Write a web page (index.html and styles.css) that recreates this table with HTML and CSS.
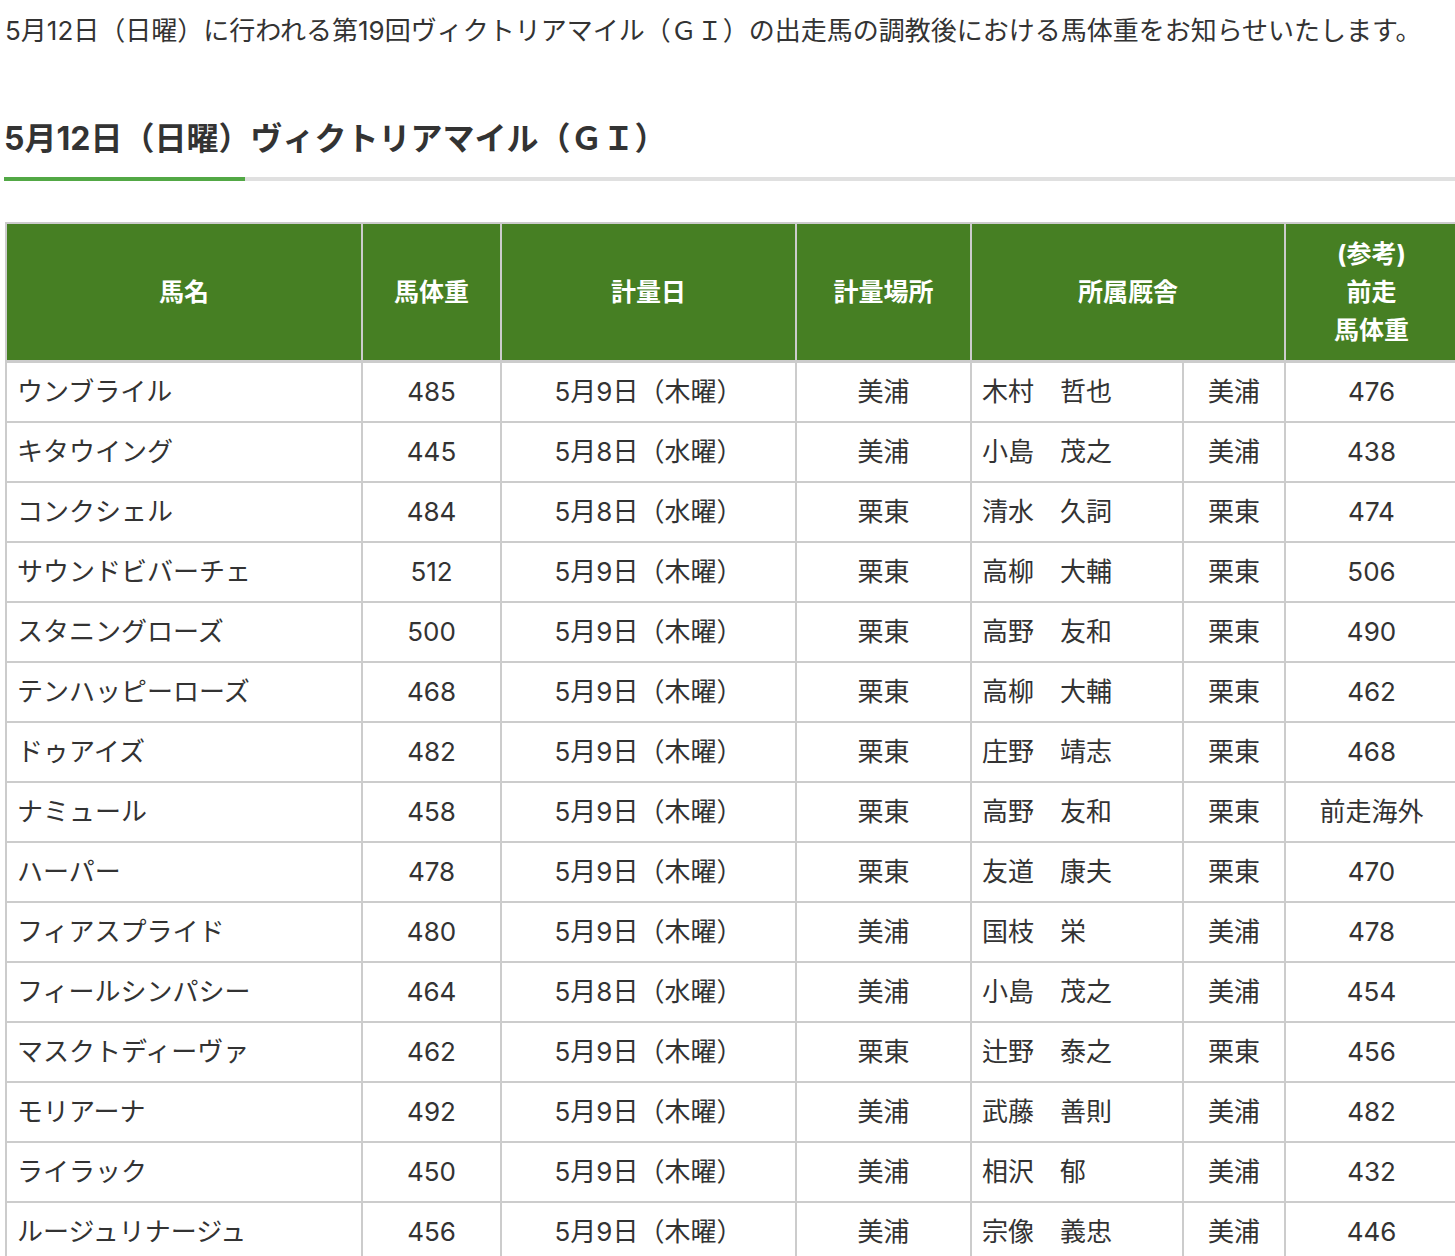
FILE: index.html
```html
<!DOCTYPE html>
<html lang="ja">
<head>
<meta charset="utf-8">
<title>馬体重</title>
<link rel="stylesheet" href="styles.css">
</head>
<body>
<main class="page">
  <p class="intro">5月12日（日曜）に行われる第19回ヴィクトリアマイル（ＧＩ）の出走馬の調教後における馬体重をお知らせいたします。</p>
  <h2 class="heading">5月12日（日曜）ヴィクトリアマイル（ＧＩ）</h2>
  <table class="weights">
    <colgroup>
      <col class="c-name"><col class="c-weight"><col class="c-date"><col class="c-place"><col class="c-trainer"><col class="c-stable"><col class="c-prev">
    </colgroup>
    <thead>
      <tr>
        <th>馬名</th>
        <th>馬体重</th>
        <th>計量日</th>
        <th>計量場所</th>
        <th colspan="2">所属厩舎</th>
        <th>(参考)<br>前走<br>馬体重</th>
      </tr>
    </thead>
    <tbody>
      <tr><td class="left">ウンブライル</td><td>485</td><td>5月9日（木曜）</td><td>美浦</td><td class="left">木村　哲也</td><td>美浦</td><td>476</td></tr>
      <tr><td class="left">キタウイング</td><td>445</td><td>5月8日（水曜）</td><td>美浦</td><td class="left">小島　茂之</td><td>美浦</td><td>438</td></tr>
      <tr><td class="left">コンクシェル</td><td>484</td><td>5月8日（水曜）</td><td>栗東</td><td class="left">清水　久詞</td><td>栗東</td><td>474</td></tr>
      <tr><td class="left">サウンドビバーチェ</td><td>512</td><td>5月9日（木曜）</td><td>栗東</td><td class="left">高柳　大輔</td><td>栗東</td><td>506</td></tr>
      <tr><td class="left">スタニングローズ</td><td>500</td><td>5月9日（木曜）</td><td>栗東</td><td class="left">高野　友和</td><td>栗東</td><td>490</td></tr>
      <tr><td class="left">テンハッピーローズ</td><td>468</td><td>5月9日（木曜）</td><td>栗東</td><td class="left">高柳　大輔</td><td>栗東</td><td>462</td></tr>
      <tr><td class="left">ドゥアイズ</td><td>482</td><td>5月9日（木曜）</td><td>栗東</td><td class="left">庄野　靖志</td><td>栗東</td><td>468</td></tr>
      <tr><td class="left">ナミュール</td><td>458</td><td>5月9日（木曜）</td><td>栗東</td><td class="left">高野　友和</td><td>栗東</td><td>前走海外</td></tr>
      <tr><td class="left">ハーパー</td><td>478</td><td>5月9日（木曜）</td><td>栗東</td><td class="left">友道　康夫</td><td>栗東</td><td>470</td></tr>
      <tr><td class="left">フィアスプライド</td><td>480</td><td>5月9日（木曜）</td><td>美浦</td><td class="left">国枝　栄</td><td>美浦</td><td>478</td></tr>
      <tr><td class="left">フィールシンパシー</td><td>464</td><td>5月8日（水曜）</td><td>美浦</td><td class="left">小島　茂之</td><td>美浦</td><td>454</td></tr>
      <tr><td class="left">マスクトディーヴァ</td><td>462</td><td>5月9日（木曜）</td><td>栗東</td><td class="left">辻野　泰之</td><td>栗東</td><td>456</td></tr>
      <tr><td class="left">モリアーナ</td><td>492</td><td>5月9日（木曜）</td><td>美浦</td><td class="left">武藤　善則</td><td>美浦</td><td>482</td></tr>
      <tr><td class="left">ライラック</td><td>450</td><td>5月9日（木曜）</td><td>美浦</td><td class="left">相沢　郁</td><td>美浦</td><td>432</td></tr>
      <tr><td class="left">ルージュリナージュ</td><td>456</td><td>5月9日（木曜）</td><td>美浦</td><td class="left">宗像　義忠</td><td>美浦</td><td>446</td></tr>
    </tbody>
  </table>
</main>
</body>
</html>
```

FILE: styles.css
```css
html {
  overflow: hidden;
}
body {
  margin: 0;
  background: #fff;
  color: #333;
  font-family: Inter, "Noto Sans CJK JP", sans-serif;
}
.page {
  padding: 0 0 0 5px;
}
.intro {
  margin: 0;
  padding-top: 11px;
  font-size: 26px;
  line-height: 40px;
  white-space: nowrap;
}
.heading {
  margin: 66px 0 0 -1px;
  font-size: 32px;
  font-weight: 700;
  line-height: 44px;
  padding-bottom: 20px;
  background: linear-gradient(to right, #52a845 0, #52a845 241px, #e0e0e0 241px) left bottom / 100% 4px no-repeat;
  white-space: nowrap;
}
.weights {
  margin-top: 41px;
  width: 1454px;
  table-layout: fixed;
  border-collapse: collapse;
  font-size: 26px;
  line-height: 38px;
}
.c-name { width: 356px; }
.c-weight { width: 139px; }
.c-date { width: 295px; }
.c-place { width: 175px; }
.c-trainer { width: 212px; }
.c-stable { width: 102px; }
.c-prev { width: 173px; }
.weights th,
.weights td {
  border: 2px solid #cccccc;
  padding: 10px 10px;
  text-align: center;
  vertical-align: middle;
  white-space: nowrap;
}
.weights th {
  background: #467f23;
  color: #fff;
  font-weight: 700;
  font-size: 25px;
  padding-top: 11px;
  padding-bottom: 11px;
  border-bottom-width: 3px;
}
.weights td {
  color: #333;
}
.weights td.left {
  text-align: left;
}
```
